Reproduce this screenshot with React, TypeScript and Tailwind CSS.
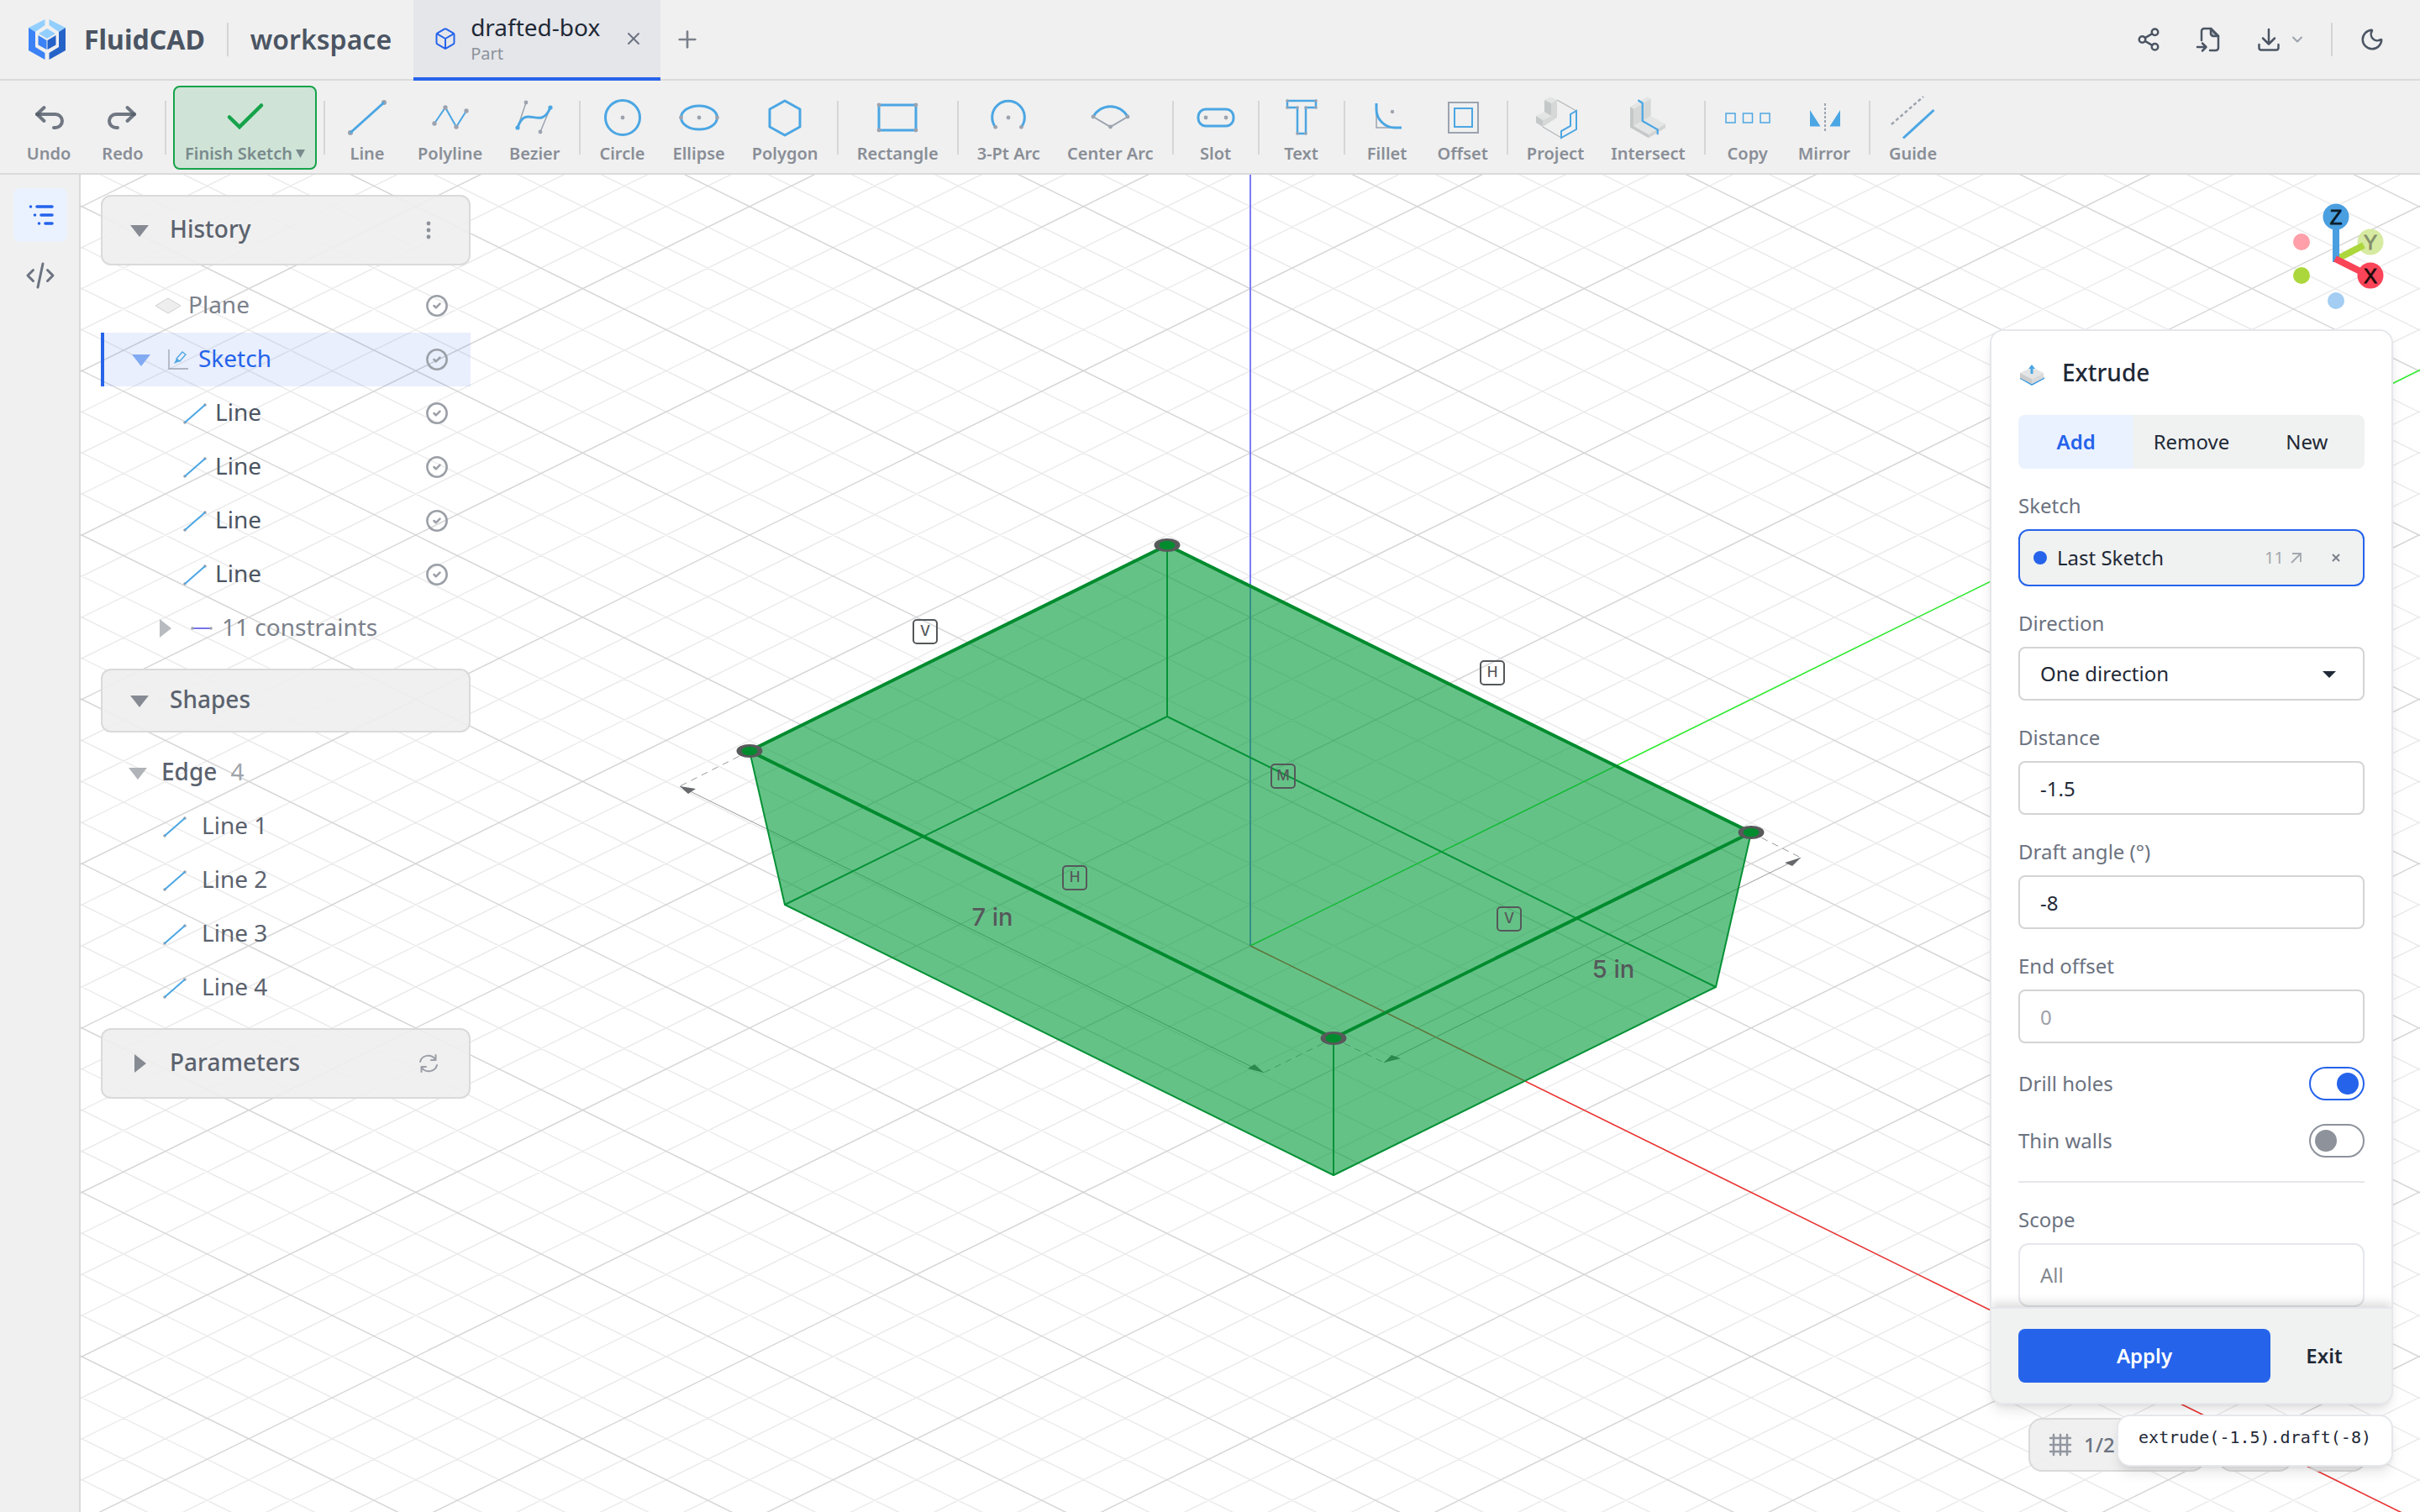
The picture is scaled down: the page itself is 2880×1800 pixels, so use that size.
import { ReactNode } from 'react';
import { Box, CircleCheck, ChevronDown, Moon, Plus, Share2, X } from 'lucide-react';

const BLUE = '#4ba6e3';
const GRAY = '#9ca3af';

function Dots({ points, r = 2 }: { points: number[][]; r?: number }) {
  return (
    <>
      {points.map(([x, y]) => (
        <circle key={`${x}-${y}`} cx={x} cy={y} r={r} fill={GRAY} stroke="none" />
      ))}
    </>
  );
}

const toolIcons: Record<string, ReactNode> = {
  Undo: (
    <g stroke="#505967" strokeOpacity={0.8} strokeWidth={4} strokeLinecap="round" strokeLinejoin="round">
      <path d="M18.5 12 10 20l8.5 8" />
      <path d="M10 20h22a8 8 0 0 1 0 16h-2" />
    </g>
  ),
  Redo: (
    <g stroke="#505967" strokeOpacity={0.8} strokeWidth={4} strokeLinecap="round" strokeLinejoin="round">
      <path d="M29.5 12 38 20l-8.5 8" />
      <path d="M38 20H16a8 8 0 0 0 0 16h2" />
    </g>
  ),
  'Finish Sketch': <path d="M5 23.5 17 35 43 9.5" stroke="#16a34a" strokeWidth={4.5} strokeLinecap="round" />,
  Line: (
    <>
      <Dots points={[[4, 42], [44, 6]]} r={3} />
      <path d="M4 42 44 6" strokeWidth={3} />
    </>
  ),
  Polyline: (
    <>
      <path d="M5 31 18 12 31 35 43 16" strokeWidth={2} />
      <Dots points={[[5, 31], [18, 12], [31, 35], [43, 16]]} r={2.7} />
    </>
  ),
  Bezier: (
    <>
      <path d="M4 36 14 6M31 41 43 12" stroke={GRAY} strokeWidth={1.5} />
      <Dots points={[[14, 6], [31, 41]]} r={2.4} />
      <path d="M4 36C14 6 31 41 43 12" strokeWidth={3} />
      <circle cx={4} cy={36} r={2.6} fill={BLUE} stroke="none" />
      <circle cx={43} cy={12} r={2.6} fill={BLUE} stroke="none" />
    </>
  ),
  Circle: (
    <>
      <circle cx={24} cy={24} r={20.5} strokeWidth={3} />
      <Dots points={[[24, 24]]} r={2.4} />
    </>
  ),
  Ellipse: (
    <>
      <ellipse cx={24} cy={24} rx={21.5} ry={14} strokeWidth={3} />
      <Dots points={[[2.5, 24], [24, 24], [45.5, 24]]} r={2.4} />
    </>
  ),
  Polygon: <path d="M24 4 42 14v21L24 45 6 35V14Z" strokeWidth={3} strokeLinejoin="round" />,
  Rectangle: (
    <>
      <path d="M2 9H46V39H2Z" strokeWidth={3} />
      <Dots points={[[2, 9], [46, 9], [46, 39], [2, 39]]} r={2.4} />
    </>
  ),
  '3-Pt Arc': (
    <>
      <path d="M8.7 35.3A19.3 19.3 0 1 1 39.4 35.3" strokeWidth={3} />
      <Dots points={[[8.7, 35.3], [24, 24], [39.4, 35.3]]} r={2.4} />
    </>
  ),
  'Center Arc': (
    <>
      <path d="M4 23 24.5 35 45 23" stroke={GRAY} strokeWidth={2} />
      <path d="M4 23A23.2 23.2 0 0 1 45 23" strokeWidth={3} />
      <Dots points={[[4, 23], [24.5, 35], [45, 23]]} r={2.4} />
    </>
  ),
  Slot: (
    <>
      <rect x={3} y={14} width={42} height={20} rx={9} strokeWidth={3} />
      <Dots points={[[12, 24], [36, 24]]} r={2.4} />
    </>
  ),
  Text: (
    <>
      <path d="M7 4H41V12H29V43H19V12H7Z" strokeWidth={2.5} />
      <Dots points={[[7, 4], [41, 4], [41, 12], [29, 12], [29, 43], [19, 43], [19, 12], [7, 12]]} r={1.8} />
    </>
  ),
  Fillet: (
    <>
      <path d="M11 20V36H27" stroke={GRAY} strokeWidth={1.5} />
      <path d="M11 7V14A22 22 0 0 0 33 36H41" strokeWidth={3} />
      <Dots points={[[30, 17]]} r={2.2} />
    </>
  ),
  Offset: (
    <>
      <rect x={7} y={6} width={35} height={36} stroke={GRAY} strokeWidth={2} />
      <rect x={14} y={13} width={21} height={22} strokeWidth={2} />
    </>
  ),
  Project: (
    <>
      <g stroke="none">
        <path d="M11 3 18-1 26 3 19 7Z" fill="#e3e5e5" />
        <path d="M11 3 19 7V22L11 18Z" fill="#c5c8c8" />
        <path d="M19 7 26 3V24L9 35V27L19 22Z" fill="#d6d8d8" />
        <path d="M1 22 11 17 19 22 9 27Z" fill="#e3e5e5" />
        <path d="M1 22 9 27V35L1 30Z" fill="#c5c8c8" />
      </g>
      <path d="M26 3 49 16M9 35 31 48" stroke="#b3b7bb" strokeWidth={1.3} />
      <path d="M49 16V38L31 48V40L42 34V20Z" strokeWidth={2} />
    </>
  ),
  Intersect: (
    <>
      <g stroke="none">
        <path d="M3 11 23.7-1 27.7 1.7 7.3 13.7Z" fill="#e3e5e5" />
        <path d="M7.3 13.7 27.7 1.7V22.3L7.3 34Z" fill="#d6d8d8" />
        <path d="M3 11 7.3 13.7V34L25 44V48.3L3 35.7Z" fill="#c5c8c8" />
        <path d="M7.3 34 27.7 22.3 45 31.7 25 44Z" fill="#e3e5e5" />
        <path d="M25 44 45 31.7V36.3L25 48.3Z" fill="#d2d4d4" />
      </g>
      <path d="M12.3 3.3 17.7 6.7V28L35.7 38.3V44.3" strokeWidth={2.2} />
    </>
  ),
  Copy: (
    <g strokeWidth={1.5}>
      <rect x={-2} y={19} width={11} height={11} />
      <rect x={18.5} y={19} width={11} height={11} />
      <rect x={39} y={19} width={11} height={11} />
    </g>
  ),
  Mirror: (
    <>
      <path d="M7 15V34.5H19.5ZM43 15V34.5H30.5Z" fill={BLUE} stroke="none" />
      <path d="M25 7V42" stroke={GRAY} strokeWidth={2} strokeDasharray="3 2" />
    </>
  ),
  Guide: (
    <>
      <path d="M-2 32 36-1" stroke={GRAY} strokeWidth={2.5} strokeDasharray="4 3" />
      <path d="M12 48.5 48.5 15" strokeWidth={3} />
    </>
  ),
};

const toolGroups = [
  ['Undo', 'Redo'],
  ['Finish Sketch'],
  ['Line', 'Polyline', 'Bezier'],
  ['Circle', 'Ellipse', 'Polygon'],
  ['Rectangle'],
  ['3-Pt Arc', 'Center Arc'],
  ['Slot'],
  ['Text'],
  ['Fillet', 'Offset'],
  ['Project', 'Intersect'],
  ['Copy', 'Mirror'],
  ['Guide'],
];

function ToolButton({ name }: { name: string }) {
  const active = name === 'Finish Sketch';
  return (
    <button
      className={`flex h-[100px] min-w-[84px] flex-col items-center gap-1.5 rounded-lg border-2 px-3 pt-3 ${
        active ? 'border-[#16a34a] bg-[#cfe4d7] text-[#7a8a8c]' : 'border-transparent text-[#898e97]'
      }`}
    >
      <svg className="size-12 shrink-0 overflow-visible" viewBox="0 0 48 48" fill="none" stroke={BLUE}>
        {toolIcons[name]}
      </svg>
      <span className="flex items-center gap-1 text-xl leading-6.5 font-semibold whitespace-nowrap">
        {name}
        {active && (
          <svg className="h-3 w-[11px]" viewBox="0 0 11 12" fill="currentColor">
            <path d="M0 1h11L5.5 11Z" />
          </svg>
        )}
      </span>
    </button>
  );
}

function Logo() {
  return (
    <svg className="h-12 w-11" viewBox="0 0 44 48">
      <path d="M0 10 19.5 0V7L8 15Z" fill="#93cffe" />
      <path d="M44 10 24.5 0V7L36 15Z" fill="#93cffe" />
      <path d="M0 10 8 15V33L19.5 40V48L0 37Z" fill="#3b82f6" />
      <path d="M44 10 36 15V33L24.5 40V48L44 37Z" fill="#2563c8" />
      <path d="M22 11 32 17 22 23 12 17Z" fill="#93cffe" />
      <path d="M11.5 19 21.5 25V36L11.5 30.5Z" fill="#3b82f6" />
      <path d="M32.5 19 22.5 25V36L32.5 30.5Z" fill="#2563c8" />
    </svg>
  );
}

function Header() {
  return (
    <header className="flex h-24 shrink-0 items-stretch border-b-2 border-[#dadada] bg-[#f0f0f0]">
      <div className="flex items-center pr-[26px] pl-[34px] text-[#4b5563]">
        <Logo />
        <span className="ml-[22px] text-[32px] font-bold">FluidCAD</span>
        <span className="mx-[26px] h-10 w-0.5 bg-[#d4d4d4]" />
        <span className="text-[32px] font-semibold">workspace</span>
      </div>
      <div className="-mb-0.5 flex w-[294px] items-center border-b-4 border-[#2563eb] bg-[#e5e6ea] pr-4 pl-6">
        <Box className="size-7 shrink-0 text-[#2563eb]" strokeWidth={1.7} />
        <div className="ml-4 flex flex-col">
          <span className="text-[28px] leading-9 text-[#1f2937]">drafted-box</span>
          <span className="text-xl leading-7 text-[#8d929b]">Part</span>
        </div>
        <button className="ml-auto p-1 text-[#6b7280]" aria-label="Close tab">
          <X className="size-6" strokeWidth={2} />
        </button>
      </div>
      <button className="px-4 text-[#7b818b]" aria-label="New tab">
        <Plus className="size-8" strokeWidth={2} />
      </button>
      <div className="ml-auto flex items-center pr-[42px] text-[#4b5563]">
        <button aria-label="Share">
          <Share2 className="size-[30px]" strokeWidth={2} />
        </button>
        <button className="ml-10" aria-label="Import file">
          <svg className="size-8" viewBox="0 0 32 32" fill="none" stroke="currentColor" strokeWidth={2.5} strokeLinecap="round" strokeLinejoin="round">
            <path d="M8 17V6a3 3 0 0 1 3-3h8l9 9v14a3 3 0 0 1-3 3h-7" />
            <path d="M19 3v6a3 3 0 0 0 3 3h6Z" fill="currentColor" fillOpacity={0.4} />
            <path d="M3 25h10M9 20.5 13.5 25 9 29.5" />
          </svg>
        </button>
        <button className="ml-10 flex items-center gap-2" aria-label="Download">
          <svg className="size-8" viewBox="0 0 32 32" fill="none" stroke="currentColor" strokeWidth={2.5} strokeLinecap="round" strokeLinejoin="round">
            <path d="M16 4v17M9 14.5l7 7 7-7" />
            <path d="M4.5 22v3.5A2.5 2.5 0 0 0 7 28.5h18a2.5 2.5 0 0 0 2.5-3V22" />
          </svg>
          <ChevronDown className="size-5 text-[#9ca3af]" strokeWidth={2.5} />
        </button>
        <span className="mr-8 ml-[30px] h-10 w-0.5 bg-[#d4d4d4]" />
        <button aria-label="Dark mode">
          <Moon className="size-[30px]" strokeWidth={2} />
        </button>
      </div>
    </header>
  );
}

function Toolbar() {
  return (
    <div className="flex h-28 shrink-0 items-start gap-1 border-b-2 border-[#dadada] bg-[#f0f0f0] px-4 pt-1.5">
      {toolGroups.map((group, i) => (
        <div key={group[0]} className="flex items-start gap-1">
          {i > 0 && <span className="mx-1 mt-[18px] h-16 w-0.5 bg-[#d6d6d6]" />}
          {group.map(name => (
            <ToolButton key={name} name={name} />
          ))}
        </div>
      ))}
    </div>
  );
}

function Rail() {
  return (
    <nav className="flex w-24 shrink-0 flex-col items-start gap-2 border-r-2 border-[#dadada] bg-[#f0f0f0] pt-4 pl-4">
      <button className="flex size-16 items-center justify-center rounded-lg bg-[#ebf2ff]" aria-label="Model tree">
        <svg className="size-8" viewBox="0 0 32 32" stroke="#2563eb" strokeWidth={3.6} strokeLinecap="round">
          <path d="M4.5 6h.01M12 6h18M9.5 16h.01M17 16h13M14.5 26h.01M22 26h8" />
        </svg>
      </button>
      <button className="flex size-16 items-center justify-center" aria-label="Code">
        <svg className="size-9" viewBox="0 0 36 36" fill="none" stroke="#6b7280" strokeWidth={3} strokeLinecap="round" strokeLinejoin="round">
          <path d="M9.5 11.5 3 18l6.5 6.5M26.5 11.5 33 18l-6.5 6.5M21 4 15 32" />
        </svg>
      </button>
    </nav>
  );
}

// isometric projection of the sketch plane
const ORIGIN = { x: 1488, y: 1126 };
const SLOPE = 0.4923;
const STEP = 48.9;

function gridPath(major: boolean) {
  let d = '';
  for (let k = -60; k <= 60; k++) {
    if ((k % 4 === 0) !== major) continue;
    const y = ORIGIN.y + k * STEP;
    d += `M-512 ${y - 2000 * SLOPE}L3488 ${y + 2000 * SLOPE}`;
    d += `M-512 ${y + 2000 * SLOPE}L3488 ${y - 2000 * SLOPE}`;
  }
  return d;
}

const badges = [
  { label: 'V', x: 1101, y: 752 },
  { label: 'H', x: 1776, y: 801 },
  { label: 'M', x: 1527, y: 924 },
  { label: 'H', x: 1279, y: 1045 },
  { label: 'V', x: 1796, y: 1094 },
];

const corners = [
  [1389, 649],
  [2084, 991],
  [1587, 1236],
  [892, 894],
];

function Viewport() {
  return (
    <svg className="absolute inset-0 h-full w-full" viewBox="96 208 2784 1592" preserveAspectRatio="xMidYMid slice" fill="none">
      <path d={gridPath(false)} stroke="#ebebeb" strokeWidth={1.5} />
      <path d={gridPath(true)} stroke="#d6d6d6" strokeWidth={1.5} />

      <path d="M1488 208V1126" stroke="#7b7bf5" strokeWidth={2} />
      <path d="M1488 1126 3488 141" stroke="#2ef02e" strokeWidth={1.5} />
      <path d="M1488 1126 3488 2111" stroke="#f03030" strokeWidth={1.5} />

      {/* dimensions */}
      <g stroke="#9a9a9a" strokeWidth={1}>
        <path d="M809 936 1504 1277M2143 1021 1647 1265" />
        <path d="M892 894 809 936M1587 1236 1504 1277M2084 991 2143 1021M1587 1236 1647 1265" strokeDasharray="8 6" />
      </g>
      <g fill="#66686b">
        <path d="M809 936 828 939 819 945Z" />
        <path d="M1504 1277 1485 1272 1493 1267Z" />
        <path d="M2143 1021 2124 1027 2133 1031Z" />
        <path d="M1647 1265 1656 1256 1667 1260Z" />
      </g>

      <path d="M1389 649 2084 991 2042 1175 1587 1399 934 1077 892 894Z" fill="#079d3e" fillOpacity={0.62} />
      <g stroke="#069237" strokeWidth={2} strokeLinejoin="round">
        <path d="M1389 853 2042 1175 1587 1399 934 1077Z" />
        <path d="M1389 649V853M2084 991 2042 1175M1587 1236V1399M892 894 934 1077" />
      </g>
      <path d="M1389 649 2084 991 1587 1236 892 894Z" stroke="#008b2e" strokeWidth={4} />

      {corners.map(([x, y]) => (
        <g key={x}>
          <ellipse cx={x} cy={y} rx={15.5} ry={8} fill="#58595b" />
          <ellipse cx={x} cy={y} rx={9.5} ry={5.2} fill="#008b2e" />
        </g>
      ))}

      <g fontFamily="Inter, 'Liberation Sans', sans-serif" fontWeight={500} textAnchor="middle" fill="#55585a">
        {badges.map(b => (
          <g key={b.x}>
            <rect x={b.x - 14} y={b.y - 14} width={28} height={28} rx={4} fill="none" stroke="#55585a" strokeWidth={2} />
            <text x={b.x} y={b.y + 5} fontSize={17}>
              {b.label}
            </text>
          </g>
        ))}
        <text x={1181} y={1102} fontSize={29}>
          7 in
        </text>
        <text x={1920} y={1164} fontSize={29}>
          5 in
        </text>
      </g>
    </svg>
  );
}

function Gizmo() {
  return (
    <svg className="mr-2 h-38 w-30" viewBox="2720 232 120 152" strokeWidth={8}>
      <circle cx={2739} cy={288} r={10} fill="#ff9fa9" />
      <circle cx={2780} cy={358} r={10} fill="#a3cdf2" />
      <circle cx={2821} cy={288} r={15.5} fill="#d6eaa1" />
      <path d="M2780 309 2813 292" stroke="#acd73c" />
      <path d="M2780 312V258" stroke="#499fe0" />
      <path d="M2779 308 2821 329" stroke="#fa4458" />
      <circle cx={2739} cy={328} r={10} fill="#acd73c" />
      <circle cx={2780} cy={258} r={15.5} fill="#499fe0" />
      <circle cx={2821} cy={328} r={15.5} fill="#fa4458" />
      <g fontFamily="'Liberation Sans', sans-serif" fontSize={24} textAnchor="middle" strokeWidth={0.8}>
        <text x={2780} y={267} fill="#0b1a26" stroke="#0b1a26">Z</text>
        <text x={2821} y={297} fill="#82906a" stroke="#82906a">Y</text>
        <text x={2821} y={337} fill="#1f0a0c" stroke="#1f0a0c">X</text>
      </g>
    </svg>
  );
}

function Triangle({ open = true, className }: { open?: boolean; className: string }) {
  return (
    <svg className={`size-6 shrink-0 ${className}`} viewBox="0 0 24 24" fill="currentColor">
      <path d={open ? 'M1 6h22L12 20Z' : 'M6 1v22L20 12Z'} />
    </svg>
  );
}

function LineIcon() {
  return (
    <svg className="size-8 shrink-0" viewBox="0 0 32 32" stroke={BLUE} strokeWidth={2}>
      <Dots points={[[4, 27], [28, 6]]} r={1.8} />
      <path d="M4 27 28 6" />
    </svg>
  );
}

interface SectionHeaderProps {
  title: string;
  open?: boolean;
  className?: string;
  children?: ReactNode;
}

function SectionHeader({ title, open = true, className = 'h-[84px]', children }: SectionHeaderProps) {
  return (
    <div className={`flex shrink-0 items-center rounded-xl border-2 border-[#dadada] bg-[#eeeeee]/90 pr-[30px] pl-8 ${className}`}>
      <button className="flex items-center gap-6 text-[#5b626e]">
        <Triangle open={open} className="text-[#868b93]" />
        <span className="pb-1 leading-8 font-medium">{title}</span>
      </button>
      {children}
    </div>
  );
}

function Check() {
  return <CircleCheck className="ml-auto size-7 shrink-0 text-[#9b9fa7]" strokeWidth={2.2} />;
}

function Sidebar() {
  return (
    <aside className="flex w-[440px] shrink-0 flex-col gap-4 text-[28px] text-[#4b5563]">
      <SectionHeader title="History">
        <button className="ml-auto flex w-9 justify-center" aria-label="History menu">
          <svg className="size-6" viewBox="0 0 24 24" fill="#8d929a">
            <circle cx={12} cy={4} r={2.4} />
            <circle cx={12} cy={12} r={2.4} />
            <circle cx={12} cy={20} r={2.4} />
          </svg>
        </button>
      </SectionHeader>

      <ul>
        <li className="flex h-16 items-center pr-[26px] pl-16 text-[#7b818b]">
          <svg className="mr-2 h-5 w-8" viewBox="0 0 32 20">
            <path d="M1 10 16 1 31 10 16 19Z" fill="#eeeeee" stroke="#d0d0d0" />
          </svg>
          <span className="pb-1">Plane</span>
          <Check />
        </li>
        <li className="flex h-16 items-center border-l-4 border-[#2563eb] bg-[#2563eb]/10 pr-[26px] pl-8 text-[#2563eb]">
          <Triangle className="text-[#82aaf2]" />
          <svg className="mr-3 ml-5 size-6" viewBox="0 0 24 24" fill="none">
            <path d="M1 0V23H24" stroke="#9ca3af" strokeWidth={1.3} />
            <path d="M10 11 17 3 21 6 14 14Z" stroke={BLUE} strokeWidth={1.3} />
            <path d="M10 11 14 14 7 17Z" fill={BLUE} />
          </svg>
          <span className="pb-1">Sketch</span>
          <Check />
        </li>
        {[1, 2, 3, 4].map(n => (
          <li key={n} className="flex h-16 items-center gap-2 pr-[26px] pl-24">
            <LineIcon />
            <span className="pb-1">Line</span>
            <Check />
          </li>
        ))}
        <li className="flex h-16 items-center pl-16 text-[#7b818b]">
          <Triangle open={false} className="text-[#b8bbc0]" />
          <svg className="mr-2.5 ml-[18px] h-4 w-7" viewBox="0 0 28 16">
            <path d="M3 8H25" stroke="#7774ea" strokeWidth={2} />
            <Dots points={[[3, 8], [25, 8]]} r={1.8} />
          </svg>
          <span className="pb-1">11 constraints</span>
        </li>
      </ul>

      <SectionHeader title="Shapes" className="h-[76px]" />

      <ul className="text-[#5b626e]">
        <li className="flex h-16 items-center pl-8 font-medium">
          <Triangle className="mr-4 text-[#b0b3b8]" />
          <span className="pb-1">Edge</span>
          <span className="ml-4 pb-1 font-normal text-[#a0a4ab]">4</span>
        </li>
        {[1, 2, 3, 4].map(n => (
          <li key={n} className="flex h-16 items-center gap-4 pl-[72px]">
            <LineIcon />
            <span className="pb-1">Line {n}</span>
          </li>
        ))}
      </ul>

      <SectionHeader title="Parameters" open={false}>
        <button className="ml-auto flex w-9 justify-center" aria-label="Refresh parameters">
          <svg className="size-6" viewBox="0 0 24 24" fill="none" stroke="#9a9ea6" strokeWidth={2} strokeLinecap="round" strokeLinejoin="round">
            <path d="M2 10C4 2 15 0 20 7M20.5 2V8H15M22 14C20 22 9 24 4 17M3.5 22V16H9" />
          </svg>
        </button>
      </SectionHeader>
    </aside>
  );
}

function Field({ id, label, children }: { id: string; label: string; children: ReactNode }) {
  return (
    <div className="flex flex-col gap-2.5">
      <label htmlFor={id} className="leading-9 text-[#6b7280]">
        {label}
      </label>
      {children}
    </div>
  );
}

const inputClass =
  'h-16 w-full rounded-lg border-2 border-[#d4d4d4] bg-white px-6 text-[#1f2937] placeholder:text-[#9ca0a8]';

function Toggle({ id, label, defaultChecked }: { id: string; label: string; defaultChecked?: boolean }) {
  return (
    <div className="flex h-10 items-center justify-between">
      <label htmlFor={id} className="text-[#6b7280]">
        {label}
      </label>
      <input
        id={id}
        type="checkbox"
        role="switch"
        defaultChecked={defaultChecked}
        className="h-10 w-[66px] appearance-none rounded-full border-2 border-[#8d929b] p-[5px] before:block before:size-[26px] before:rounded-full before:bg-[#8d929b] checked:border-[#2563eb] checked:before:ml-auto checked:before:bg-[#2563eb]"
      />
    </div>
  );
}

function ExtrudePanel() {
  return (
    <section className="flex min-h-0 flex-1 flex-col overflow-hidden rounded-2xl border-2 border-[#e5e7eb] bg-white text-2xl shadow-lg">
      <div className="flex min-h-0 flex-1 flex-col gap-[26px] overflow-hidden px-8 pt-[26px]">
        <div className="flex h-12 shrink-0 items-center gap-5">
          <svg className="h-8 w-8" viewBox="0 0 32 32">
            <path d="M2 21 16 29 31 21V23L16 31 2 23Z" fill="#3f9be0" />
            <path d="M2 16 16 9 30 16 16 23Z" fill="#e3e4e5" />
            <path d="M2 16 16 23V29L2 22Z" fill="#cbcccd" />
            <path d="M30 16 16 23V29L30 22Z" fill="#d8d9da" />
            <path d="M14.5 17V11H12L16 6 20 11H17.5V17Z" fill={BLUE} />
          </svg>
          <h2 className="text-[28px] font-medium text-[#1f2937]">Extrude</h2>
        </div>

        <div className="flex h-16 shrink-0 overflow-hidden rounded-lg bg-[#f0f2f1] text-[#1f2937]">
          <button className="flex-1 bg-[#ebf2ff] font-semibold text-[#2563eb]">Add</button>
          <button className="flex-1">Remove</button>
          <button className="flex-1">New</button>
        </div>

        <div className="flex flex-col gap-2.5">
          <span className="leading-9 text-[#6b7280]">Sketch</span>
          <div className="flex h-[68px] items-center rounded-xl border-2 border-[#2563eb] bg-[#f0f2f1] pr-4 pl-4 text-[#1f2937]">
            <span className="mr-3 size-4 rounded-full bg-[#2563eb]" />
            Last Sketch
            <span className="ml-auto flex items-center gap-2 text-xl text-[#a3a7ae]">
              11
              <svg className="size-3.5" viewBox="0 0 14 14" fill="none" stroke="currentColor" strokeWidth={1.8}>
                <path d="M2 2h10v10M12 2 1 13" />
              </svg>
            </span>
            <button className="ml-6 p-2 text-[#7b818b]" aria-label="Clear sketch">
              <svg className="size-4" viewBox="0 0 16 16" stroke="currentColor" strokeWidth={2}>
                <path d="M4 4 12 12M12 4 4 12" />
              </svg>
            </button>
          </div>
        </div>

        <Field id="direction" label="Direction">
          <div className="relative">
            <select id="direction" className={`${inputClass} appearance-none`}>
              <option>One direction</option>
              <option>Two directions</option>
              <option>Symmetric</option>
            </select>
            <svg className="pointer-events-none absolute top-7 right-[34px] h-2.5 w-4" viewBox="0 0 16 10" fill="#1f2937">
              <path d="M0 1h16L8 9Z" />
            </svg>
          </div>
        </Field>
        <Field id="distance" label="Distance">
          <input id="distance" className={inputClass} defaultValue="-1.5" />
        </Field>
        <Field id="draft" label="Draft angle (°)">
          <input id="draft" className={inputClass} defaultValue="-8" />
        </Field>
        <Field id="offset" label="End offset">
          <input id="offset" className={inputClass} placeholder="0" />
        </Field>

        <div className="flex flex-col gap-7 py-0.5">
          <Toggle id="drill" label="Drill holes" defaultChecked />
          <Toggle id="thin" label="Thin walls" />
        </div>
        <hr className="border-t-2 border-[#e5e7eb]" />

        <div className="flex shrink-0 flex-col gap-2.5">
          <span className="leading-9 text-[#6b7280]">Scope</span>
          <button className="h-[76px] rounded-xl border-2 border-[#e5e7eb] px-6 text-left text-[#83888f]">All</button>
        </div>
      </div>

      <div className="relative flex shrink-0 items-center gap-4 border-t-2 border-[#e5e7eb] bg-[#f0f2f1] px-8 py-6 font-semibold shadow-[0_-4px_12px_rgba(0,0,0,0.16)]">
        <button className="h-16 w-[300px] rounded-lg bg-[#2563eb] text-white">Apply</button>
        <button className="h-16 flex-1 text-[#1f2937]">Exit</button>
      </div>
    </section>
  );
}

function StatusBar() {
  const chip = 'h-16 rounded-2xl border-2 border-[#dadada] bg-[#eeeeee]/90';
  return (
    <div className="relative mt-4 mb-12 flex justify-end gap-4 pr-8">
      <button className={`flex w-[210px] items-center gap-3.5 px-[22px] text-2xl font-medium text-[#6b7280] ${chip}`}>
        <svg className="size-7" viewBox="0 0 28 28" stroke="#9296a0" strokeWidth={2.5} strokeLinecap="round">
          <path d="M6 2V26M14 2V26M22 2V26M2 6H26M2 14H26M2 22H26" />
        </svg>
        1/2
      </button>
      <button className={`w-[88px] ${chip}`} aria-label="Fit view" />
      <button className={`w-[72px] ${chip}`} aria-label="View settings" />
      <code className="absolute -top-1 right-0 flex h-[62px] items-center rounded-2xl border-2 border-[#e5e7eb] bg-white px-6 pb-2 font-['DejaVu_Sans_Mono',monospace] text-xl whitespace-nowrap text-[#1f2937] shadow-lg">
        extrude(-1.5).draft(-8)
      </code>
    </div>
  );
}

export default function App() {
  return (
    <div className="flex h-screen flex-col overflow-hidden bg-white font-['Noto_Sans','Open_Sans',sans-serif]">
      <Header />
      <Toolbar />
      <div className="flex min-h-0 flex-1">
        <Rail />
        <main className="relative min-w-0 flex-1">
          <Viewport />
          <div className="relative flex h-full items-stretch justify-between pt-6 pr-8 pl-6">
            <Sidebar />
            <div className="flex w-[480px] shrink-0 flex-col">
              <div className="mb-2 flex justify-end">
                <Gizmo />
              </div>
              <ExtrudePanel />
              <StatusBar />
            </div>
          </div>
        </main>
      </div>
    </div>
  );
}
